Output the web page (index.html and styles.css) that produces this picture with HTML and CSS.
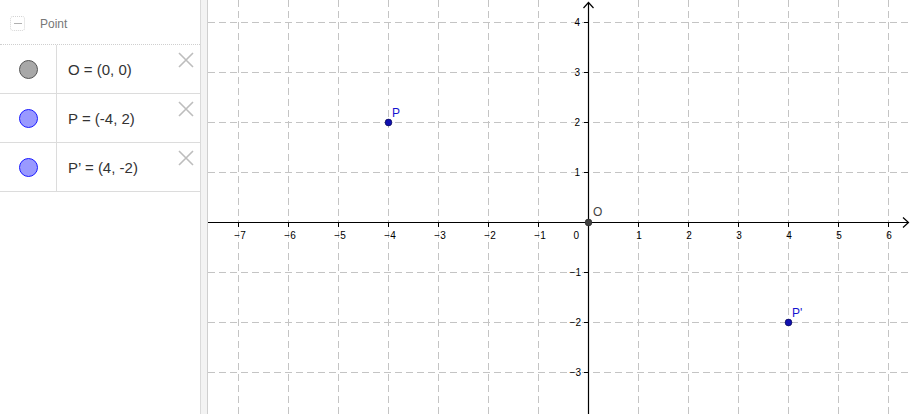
FILE: index.html
```html
<!DOCTYPE html>
<html>
<head>
<meta charset="utf-8">
<link rel="stylesheet" href="styles.css">
</head>
<body>
<div class="app">
  <div class="algebra">
    <div class="group-head">
      <span class="collapse"><span class="minus"></span></span>
      <span class="group-title">Point</span>
    </div>
    <div class="row">
      <div class="marble-cell"><span class="marble gray"></span></div>
      <div class="expr">O = (0, 0)</div>
      <svg class="close" width="16" height="16" viewBox="0 0 16 16"><path d="M1 1L15 15M15 1L1 15" stroke="#bdbdbd" stroke-width="1.6" fill="none"/></svg>
    </div>
    <div class="row">
      <div class="marble-cell"><span class="marble blue"></span></div>
      <div class="expr">P = (-4, 2)</div>
      <svg class="close" width="16" height="16" viewBox="0 0 16 16"><path d="M1 1L15 15M15 1L1 15" stroke="#bdbdbd" stroke-width="1.6" fill="none"/></svg>
    </div>
    <div class="row">
      <div class="marble-cell"><span class="marble blue"></span></div>
      <div class="expr">P’ = (4, -2)</div>
      <svg class="close" width="16" height="16" viewBox="0 0 16 16"><path d="M1 1L15 15M15 1L1 15" stroke="#bdbdbd" stroke-width="1.6" fill="none"/></svg>
    </div>
  </div>
  <div class="divider"></div>
  <div class="graphics">
    <svg width="703" height="414" viewBox="0 0 703 414" class="plot">
      <g stroke="#c4c4c4" stroke-width="1" stroke-dasharray="7 4" fill="none">
        <path d="M30.5 0V414M80.5 0V414M130.5 0V414M180.5 0V414M230.5 0V414M280.5 0V414M330.5 0V414M430.5 0V414M480.5 0V414M530.5 0V414M580.5 0V414M630.5 0V414M680.5 0V414"/>
        <path d="M0 22.5H703M0 72.5H703M0 122.5H703M0 172.5H703M0 272.5H703M0 322.5H703M0 372.5H703"/>
      </g>
      <g stroke="#000" stroke-width="1.2" fill="none">
        <path d="M0 222.5H700"/>
        <path d="M380.5 3V414"/>
        <path d="M695 217.5L700.5 222.5L695 227.5"/>
        <path d="M375.5 8L380.5 2.5L385.5 8"/>
      </g>
      <g stroke="#000" stroke-width="1">
        <path d="M30.5 222V227M80.5 222V227M130.5 222V227M180.5 222V227M230.5 222V227M280.5 222V227M330.5 222V227M430.5 222V227M480.5 222V227M530.5 222V227M580.5 222V227M630.5 222V227M680.5 222V227"/>
        <path d="M376 22.5H381M376 72.5H381M376 122.5H381M376 172.5H381M376 272.5H381M376 322.5H381M376 372.5H381"/>
      </g>
      <g class="ticklabel" text-anchor="middle">
        <text x="32" y="239">−7</text>
        <text x="82" y="239">−6</text>
        <text x="132" y="239">−5</text>
        <text x="182" y="239">−4</text>
        <text x="232" y="239">−3</text>
        <text x="282" y="239">−2</text>
        <text x="332" y="239">−1</text>
        <text x="431" y="239">1</text>
        <text x="481" y="239">2</text>
        <text x="531" y="239">3</text>
        <text x="581" y="239">4</text>
        <text x="631" y="239">5</text>
        <text x="681" y="239">6</text>
      </g>
      <g class="ticklabel" text-anchor="end">
        <text x="371" y="239">0</text>
        <text x="372" y="26">4</text>
        <text x="372" y="76">3</text>
        <text x="372" y="126">2</text>
        <text x="372" y="176">1</text>
        <text x="373" y="276">−1</text>
        <text x="373" y="326">−2</text>
        <text x="373" y="376">−3</text>
      </g>
      <circle cx="380.5" cy="222.5" r="3.4" fill="#404040" stroke="#222" stroke-width="0.6"/>
      <circle cx="180.5" cy="122.5" r="3.4" fill="#1010b0" stroke="#000040" stroke-width="0.6"/>
      <circle cx="580.5" cy="322.5" r="3.4" fill="#1010b0" stroke="#000040" stroke-width="0.6"/>
      <text class="ptlabel gray" x="385" y="216">O</text>
      <text class="ptlabel blue" x="184" y="117">P</text>
      <text class="ptlabel blue" x="584" y="317">P'</text>
    </svg>
  </div>
</div>
</body>
</html>
```
FILE: styles.css
```css
html, body {
  margin: 0;
  padding: 0;
  background: #fff;
}
body {
  font-family: "Liberation Sans", Arial, sans-serif;
  width: 911px;
  height: 414px;
  overflow: hidden;
}
.app {
  display: flex;
  width: 911px;
  height: 414px;
}
.algebra {
  width: 200px;
  flex: none;
  display: flex;
  flex-direction: column;
}
.group-head {
  height: 45px;
  box-sizing: border-box;
  border-bottom: 1px dotted #cfcfcf;
  display: flex;
  align-items: center;
  padding-left: 10px;
  padding-top: 3px;
}
.collapse {
  width: 15px;
  height: 15px;
  box-sizing: border-box;
  border: 1px dotted #d4d4d4;
  border-radius: 3px;
  display: flex;
  align-items: center;
  justify-content: center;
}
.minus {
  width: 8px;
  height: 1px;
  background: #b0b0b0;
}
.group-title {
  margin-left: 15px;
  font-size: 12px;
  color: #777;
}
.row {
  height: 49px;
  box-sizing: border-box;
  border-bottom: 1px solid #dcdcdc;
  display: flex;
  position: relative;
}
.marble-cell {
  width: 57px;
  box-sizing: border-box;
  border-right: 1px solid #dcdcdc;
  display: flex;
  align-items: center;
  justify-content: center;
}
.marble {
  width: 19px;
  height: 19px;
  box-sizing: border-box;
  border-radius: 50%;
  display: block;
}
.marble.gray {
  background: #a8a8a8;
  border: 1px solid #555;
}
.marble.blue {
  background: #9999ff;
  border: 1px solid #1a1aff;
}
.expr {
  padding-left: 11px;
  display: flex;
  align-items: center;
  font-size: 15px;
  color: #333;
  padding-top: 1px;
}
.close {
  position: absolute;
  right: 6px;
  top: 7px;
}
.divider {
  width: 8px;
  flex: none;
  box-sizing: border-box;
  background: #f3f3f3;
  border-left: 1px solid #dadada;
  border-right: 1px solid #cfcfcf;
}
.graphics {
  flex: 1;
  overflow: hidden;
}
.plot {
  display: block;
}
.ticklabel text {
  font-family: "Liberation Sans", Arial, sans-serif;
  font-size: 10px;
  fill: #000;
}
.ptlabel {
  font-family: "Liberation Sans", Arial, sans-serif;
  font-size: 12px;
}
.ptlabel.gray { fill: #444; }
.ptlabel.blue { fill: #1414d0; }
```
